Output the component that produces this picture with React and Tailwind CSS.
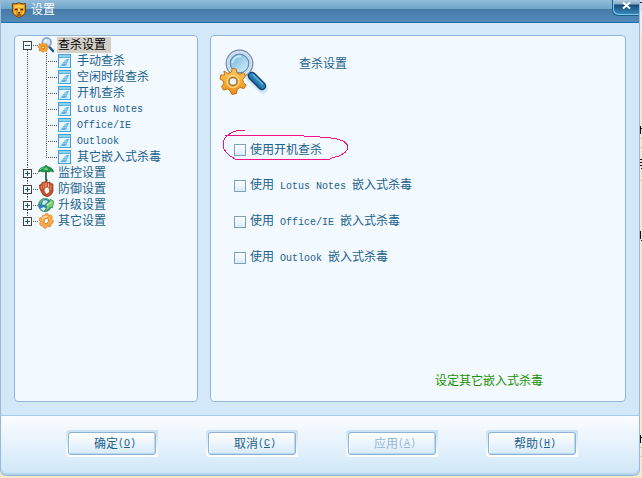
import { useState } from "react";

const CHILDREN = ["手动查杀", "空闲时段查杀", "开机查杀", "Lotus Notes", "Office/IE", "Outlook", "其它嵌入式杀毒"];

const OPTIONS = [
  { id: "boot", parts: ["使用开机查杀"] },
  { id: "lotus", parts: ["使用", " Lotus Notes ", "嵌入式杀毒"] },
  { id: "office", parts: ["使用", " Office/IE ", "嵌入式杀毒"] },
  { id: "outlook", parts: ["使用", " Outlook ", "嵌入式杀毒"] },
];

const BUTTONS = [
  { label: "确定", hotkey: "O" },
  { label: "取消", hotkey: "C" },
  { label: "应用", hotkey: "A", disabled: true },
  { label: "帮助", hotkey: "H" },
];

const DOTS_V = "w-px bg-[repeating-linear-gradient(to_bottom,#555_0px,#555_1px,transparent_1px,transparent_2px)]";
const DOTS_H = "h-px bg-[repeating-linear-gradient(to_right,transparent_0px,transparent_1px,#555_1px,#555_2px)]";

function Latin({ children }) {
  return <span className="font-['Liberation_Mono',monospace] text-[10px] whitespace-pre">{children}</span>;
}

function ShieldIcon() {
  return (
    <svg className="w-4 h-4 shrink-0" viewBox="0 0 16 16" aria-hidden="true">
      <path d="M1.5 1.5 L4 2 L8 0.8 L12 2 L14.5 1.5 V10 Q14 13.5 8 15.5 Q2 13.5 1.5 10 Z" fill="#e59a1c" stroke="#6b3f1c" />
      <path d="M3 3 L6 3.5 L8 2.5 L10 3.5 L13 3 L12.5 6.5 L8 5.5 L3.5 6.5 Z" fill="#ffcf45" />
      <path d="M4 7.5 H6.5 M12 7.5 H9.5" stroke="#4f2a0e" strokeWidth="1.4" />
      <path d="M7 10.5 H9 M8 10.5 V12 M6 13 H10" stroke="#5a2f10" fill="none" />
      <path d="M7.3 6.5 H8.7 V9.8 H7.3 Z" fill="#ffe98a" />
      <path d="M3.5 9 L4.5 12 M12.5 9 L11.5 12" stroke="#fbd04a" strokeWidth="1.3" />
    </svg>
  );
}

function ScanIcon({ className }) {
  return (
    <svg className={className} viewBox="0 0 50 50" aria-hidden="true">
      <defs>
        <linearGradient id="lens" x1="0" y1="0" x2="1" y2="1">
          <stop offset="0" stopColor="#6fb4da" />
          <stop offset="1" stopColor="#d8f0fb" />
        </linearGradient>
        <linearGradient id="handle" x1="0" y1="1" x2="1" y2="0">
          <stop offset="0" stopColor="#0d3f70" />
          <stop offset="0.55" stopColor="#2f8cc0" />
          <stop offset="1" stopColor="#0f4678" />
        </linearGradient>
        <linearGradient id="cog" x1="0" y1="0" x2="0" y2="1">
          <stop offset="0" stopColor="#ffc95c" />
          <stop offset="1" stopColor="#ee8f18" />
        </linearGradient>
      </defs>
      <path d="M27 24 L44 41" stroke="#b9dcf2" strokeWidth="10" strokeLinecap="round" opacity="0.6" />
      <path d="M29 25 L33 29" stroke="#6687a8" strokeWidth="4" />
      <path d="M33 28 L43 38" stroke="#123c69" strokeWidth="8.5" strokeLinecap="round" />
      <path d="M33 28 L43 38" stroke="url(#handle)" strokeWidth="6" strokeLinecap="round" />
      <path d="M34 26.5 L44 36.5" stroke="#68b9df" strokeWidth="1.4" />
      <circle cx="20.5" cy="15.5" r="13.3" fill="#f1f7fd" stroke="#6885ae" strokeWidth="1.2" />
      <circle cx="20.5" cy="15.5" r="11.3" fill="none" stroke="#c3d3ea" strokeWidth="1.6" />
      <circle cx="20.5" cy="15.5" r="9.3" fill="url(#lens)" stroke="#5787b5" strokeWidth="1.2" />
      <path d="M13 15 Q15 8 22 8" stroke="#c6e9f9" strokeWidth="2" fill="none" />
      <path
        d="M5 23 L9 25.5 L12 24.3 L13.5 20.5 L17 21 L18 24.8 L21 26.3 L24.5 24.5 L26.5 28 L23.8 31.5 L24.3 34.5 L27 37 L25 40.5 L21 39.5 L18 41.5 L17.5 45.5 L13 46.5 L11 42.5 L8.5 41 L4.5 42 L2.5 38.5 L4.8 35.5 L4.3 33 L1 31 L1.8 27 L5.5 27 Z"
        fill="url(#cog)" stroke="#bd6f19" strokeWidth="1" strokeLinejoin="round"
      />
      <circle cx="14" cy="33.5" r="6" fill="none" stroke="#ffd683" strokeWidth="1.3" />
      <circle cx="14" cy="33.5" r="4" fill="#e8f4fc" stroke="#a3712a" strokeWidth="1.4" />
    </svg>
  );
}

/* Same motif with heavier shapes, readable at 16px */
function ScanIconSmall() {
  return (
    <svg className="w-4 h-4 shrink-0" viewBox="0 0 16 16" aria-hidden="true">
      <path d="M11 9.5 L15 14" stroke="#1d5f93" strokeWidth="2.6" strokeLinecap="round" />
      <circle cx="8.7" cy="5.2" r="4.3" fill="#cfe9f8" stroke="#8ba4c9" strokeWidth="1.8" />
      <path d="M6.5 5 Q7 3 9 3" stroke="#fff" fill="none" />
      <path
        d="M1 6.5 L3.2 7.3 L4.8 5.8 L6.6 7.3 L9 6.8 L9 9 L10.5 10.8 L9 12.2 L8.8 14.3 L6.6 14 L4.8 15.5 L3.4 13.8 L1 13.8 L1.4 11.6 L0.2 9.8 L1.4 8.6 Z"
        fill="#f7a530" stroke="#d07c1c" strokeWidth="0.7"
      />
      <circle cx="5" cy="10.5" r="1.5" fill="#ffe2a6" stroke="#b8691a" strokeWidth="0.9" />
    </svg>
  );
}

function PageIcon() {
  return (
    <svg className="w-[13px] h-[14px] shrink-0" viewBox="0 0 13 14" aria-hidden="true">
      <rect x="0.5" y="0.5" width="12" height="13" fill="#d3edfb" stroke="#4a9fd8" />
      <path d="M1 1 H12 V3 H1 Z" fill="#8fd0f0" />
      <path d="M1 3.5 H12" stroke="#5fb2e2" />
      <path d="M1 4 H12 L1 12 Z" fill="#eef9ff" />
      <path d="M9 5 H11 L10 7 H6 Z M6 7.5 H10 L9 9.5 H4 Z M4 10 H9 L8 12 H2.5 Z" fill="#62b4e4" />
    </svg>
  );
}

function UmbrellaIcon() {
  return (
    <svg className="w-4 h-4 shrink-0" viewBox="0 0 16 16" aria-hidden="true">
      <path d="M8 6 V14.5 Q8 15.5 9.5 15" stroke="#14502d" strokeWidth="1.6" fill="none" />
      <path d="M0.5 7 Q1 2.5 7 1.5 L8 0 L9 1.5 Q15 2.5 15.5 7 L13 6 L11 7 L8 6 L5 7 L3 6 Z" fill="#22964a" stroke="#0e6b32" strokeWidth="0.7" />
      <path d="M5.5 5.5 Q6 3 8 2 Q10 3 10.5 5.5 L8 5 Z" fill="#64cf78" />
      <path d="M2 5 Q3 3 5.5 2.7" stroke="#7bd88a" fill="none" />
    </svg>
  );
}

function GloveIcon() {
  return (
    <svg className="w-4 h-4 shrink-0" viewBox="0 0 16 16" aria-hidden="true">
      <path d="M1.5 4 L3.5 3.5 L4 1.5 L6.5 1 L7 0.5 L9 0.5 L9.5 1.5 L12 1.2 L12.8 2.5 L14.8 3 L15 10 Q13.5 15 9 15.5 Q4.5 15 3.5 11 L1.8 7.5 Z" fill="#c7512b" stroke="#843018" strokeWidth="0.8" />
      <path d="M3.5 5 V8 M5.7 2 V7 M12.8 4 V9" stroke="#e88c62" />
      <path d="M8 2 V7 M10.5 2.5 V7" stroke="#f6bd9b" />
      <path d="M6 9 Q7 5.5 10 6 Q12.2 8 11.5 10.5 Q10.5 13.3 8.5 13 Q6.5 12 6 9 Z" fill="#fff6ee" stroke="#8f3920" strokeWidth="0.6" />
    </svg>
  );
}

function GlobeIcon() {
  return (
    <svg className="w-4 h-4 shrink-0" viewBox="0 0 16 16" aria-hidden="true">
      <circle cx="7" cy="8" r="6.6" fill="#2a7fc2" stroke="#5ba06a" strokeWidth="0.9" />
      <path d="M1 6.5 Q2.5 2 7.5 1.6 L5.5 4 L3.5 5 L3 8 Z" fill="#57b86a" />
      <path d="M5 4 Q8 2.5 10 4.5 L6.5 8 L4 7.5 Z" fill="#c9edfb" />
      <path d="M2.5 11.5 L5.5 10 L8 11.5 L6.5 14.3 Q4 13.8 2.5 11.5 Z" fill="#d6f0fb" />
      <path d="M7 7.5 L11.5 4.5 L12 2.2 L15.7 4 L14.5 11 L12.5 10 Q10 13.8 6 14.2 Q9 11.5 8.5 9.5 Z" fill="#7fcf72" stroke="#2d8544" strokeWidth="0.7" />
      <path d="M9 8.2 L13.8 5" stroke="#d2f5bf" />
    </svg>
  );
}

function GearIcon() {
  return (
    <svg className="w-4 h-4 shrink-0" viewBox="0 0 16 16" aria-hidden="true">
      <path d="M4.5 2.5 L6.5 2.5 L7.5 0.8 L10 0.8 L10.5 2.5 L12.8 2 L14.3 4 L13.5 6 L15.3 7.5 L14.8 10 L13 10.5 L13 13 L10.8 14 L9.5 13 L8 15.3 L5.5 14.8 L5 12.8 L2.8 12.8 L1.5 10.5 L2.8 8.8 L1 7 L1.8 4.8 L4 4.8 Z" fill="#f9ab48" stroke="#e0842a" strokeWidth="0.8" />
      <path d="M4 6.5 Q5.5 3 9.5 3.5" stroke="#ffdc9e" strokeWidth="1.4" fill="none" />
      <ellipse cx="8.3" cy="8" rx="2" ry="2.9" transform="rotate(25 8.3 8)" fill="#fff" stroke="#c8701f" strokeWidth="0.8" />
    </svg>
  );
}

const ROOTS = [
  { label: "监控设置", icon: UmbrellaIcon },
  { label: "防御设置", icon: GloveIcon },
  { label: "升级设置", icon: GlobeIcon },
  { label: "其它设置", icon: GearIcon },
];

/* Column with the +/- box and the dotted trunk running through it */
function Trunk({ open, onToggle, first, last, label }) {
  return (
    <div className="w-[9px] shrink-0 flex flex-col items-center">
      <div className={`h-1 ${first ? "" : DOTS_V}`} />
      <button type="button" aria-label={label} aria-expanded={open} onClick={onToggle} className="block">
        <svg className="block w-[9px] h-[9px]" viewBox="0 0 9 9" shapeRendering="crispEdges">
          <rect x="0.5" y="0.5" width="8" height="8" fill="#f4faff" stroke="#444" />
          <path d={open ? "M2 4.5 H7" : "M2 4.5 H7 M4.5 2 V7"} stroke="#1b5a82" />
        </svg>
      </button>
      {!last && <div className={`flex-1 ${DOTS_V}`} />}
    </div>
  );
}

function Tree() {
  const [open, setOpen] = useState(true);

  return (
    <ul className="leading-4">
      <li className="flex">
        <Trunk open={open} onToggle={() => setOpen(!open)} label="查杀设置" first />
        <div>
          <div className="h-4 flex items-center">
            <span className={`w-1.5 ${DOTS_H}`} />
            <ScanIconSmall />
            <span className="ml-[3px] pl-px pr-[5px] h-4 bg-[#d4d0c8] text-black">查杀设置</span>
          </div>
          {open && (
            <ul className="pl-[14px]">
              {CHILDREN.map((name, i) => (
                <li key={name} className="h-4 flex items-center">
                  <span className={`self-start ${DOTS_V} ${i === CHILDREN.length - 1 ? "h-[9px]" : "h-4"}`} />
                  <span className={`w-[11px] ${DOTS_H}`} />
                  <PageIcon />
                  <span className="ml-1.5 whitespace-nowrap">
                    {/^[A-Z]/.test(name) ? <Latin>{name}</Latin> : name}
                  </span>
                </li>
              ))}
            </ul>
          )}
        </div>
      </li>
      {ROOTS.map(({ label, icon: Icon }, i) => (
        <li key={label} className="flex h-4">
          <Trunk open={false} label={label} last={i === ROOTS.length - 1} />
          <div className="flex items-center">
            <span className={`w-1.5 ${DOTS_H}`} />
            <Icon />
            <span className="ml-1">{label}</span>
          </div>
        </li>
      ))}
    </ul>
  );
}

/* Hand-drawn ring around the first option */
function PenRing() {
  return (
    <svg className="absolute -left-3 -top-3 w-[128px] h-[32px] pointer-events-none" viewBox="0 0 128 32" fill="none" aria-hidden="true">
      <path
        d="M22.5 0.5 H15 L10 2.5 L6 5 L3 8 L1.5 11 V18 L4 22 L8 26 L14 29.5 H107 L111 27.5 L117 26 L123 22.5 L125.5 19 V15 L122 11.5 L115 9 L106 7.5 L90 6.5 L73 5.5 H2.5"
        stroke="#f4108a" shapeRendering="crispEdges"
      />
    </svg>
  );
}

/* Sliver of the document window that sits behind the dialog */
function BackgroundEdge() {
  return (
    <svg className="w-0.5 h-[478px] shrink-0" viewBox="0 0 2 478" shapeRendering="crispEdges" aria-hidden="true">
      <path d="M0 0 H2 V11 H0 Z" fill="#d8dde8" />
      <path d="M0 2 H2 V3 H0 Z" fill="#222" />
      <path d="M0 11 H2 V35 H0 Z" fill="#eeeeee" />
      <path d="M0 138 H2 V139 H0 Z M0 147 H2 V148 H0 Z M0 180 H2 V181 H0 Z M0 447 H2 V448 H0 Z M0 456 H2 V457 H0 Z" fill="#efc98b" />
      <path d="M0 126 H1 V134 H0 Z M1 128 H2 V129 H1 Z M0 159 H2 V160 H0 Z M0 162 H2 V163 H0 Z M0 165 H2 V166 H0 Z M1 168 H2 V169 H1 Z M0 231 H1 V239 H0 Z M1 240 H2 V241 H1 Z M0 435 H1 V443 H0 Z M1 437 H2 V438 H1 Z" fill="#111" />
    </svg>
  );
}

export default function App() {
  const [checked, setChecked] = useState({});

  return (
    <div className="min-h-screen flex bg-[#f7e8cc] font-['Liberation_Sans','Noto_Sans_CJK_SC',sans-serif] text-xs text-[#1d628b]">
      <div className="flex-1 flex flex-col mb-0.5 border-x border-[#9db9d4] rounded-b-md bg-[#d3e9f9] overflow-hidden">

        {/* Title bar */}
        <header className="h-[23px] flex items-start justify-between border-b border-[#1f6ca3] bg-[linear-gradient(to_bottom,#92bbd9_0px,#6fa5cb_9px,#4679a7_9px,#528ab9_22px)]">
          <div className="flex items-center gap-1 pl-2.5 pt-0.5">
            <ShieldIcon />
            <h1 className="text-white leading-4">设置</h1>
          </div>
          <button type="button" aria-label="关闭"
            className="w-[27px] h-4 flex justify-center border-l border-b border-[#1c5f8c] rounded-bl-md shadow-[inset_1px_-1px_0_#7fc8ec] bg-[linear-gradient(to_bottom,#b4cbdc_0px,#86abc7_4px,#174d7c_5px,#3987b8_14px)]">
            <svg className="w-[9px] h-[9px] mt-px" viewBox="0 0 9 9" aria-hidden="true">
              <path d="M1 1.5 L8 7.5 M8 1.5 L1 7.5" stroke="#fff" strokeWidth="2" />
            </svg>
          </button>
        </header>

        {/* Panels */}
        <main className="flex-1 flex gap-3 px-[13px] pt-3 pb-[13px]">
          <nav className="w-[184px] shrink-0 border border-[#92b6d9] rounded-[4px] bg-[#f2f9ff] pl-2 pt-px">
            <Tree />
          </nav>

          <section className="flex-1 flex flex-col border border-[#92b6d9] rounded-[4px] bg-[#f2f9ff]">
            <div className="flex pl-2 pt-3 gap-[30px]">
              <ScanIcon className="w-[50px] h-[50px] shrink-0" />
              <h2 className="pt-2 leading-4">查杀设置</h2>
            </div>

            <div className="flex flex-col gap-5 pl-[23px] pt-11">
              {OPTIONS.map((option, i) => (
                <div key={option.id} className="relative h-4 flex items-center gap-1">
                  <input id={option.id} type="checkbox" checked={!!checked[option.id]}
                    onChange={(e) => setChecked({ ...checked, [option.id]: e.target.checked })}
                    className="appearance-none w-3 h-3 border border-[#7f9fc0] bg-linear-to-b from-white to-[#d9ebf8] checked:bg-[#4679a7]" />
                  <label htmlFor={option.id} className="leading-4 whitespace-nowrap">
                    {option.parts.map((part) => (part.startsWith(" ") ? <Latin key={part}>{part}</Latin> : part))}
                  </label>
                  {i === 0 && <PenRing />}
                </div>
              ))}
            </div>

            <p className="mt-auto self-end pr-[82px] pb-3 leading-4 text-[#1c9200]">设定其它嵌入式杀毒</p>
          </section>
        </main>

        {/* Buttons */}
        <footer className="flex justify-center gap-12 pl-1 pt-3.5 pb-[18px] border-y border-t-[#a9cbe7] border-b-[#8fb4d3] rounded-b-md bg-linear-to-b from-[#fbfdff] to-[#cfe7f9] shadow-[inset_0_-2px_1px_#b4d5ee]">
          {BUTTONS.map(({ label, hotkey, disabled }) => (
            <button key={label} type="button" disabled={disabled}
              className="w-[92px] h-[27px] p-0.5 rounded-l-[4px] bg-linear-to-b from-[#c9e2f4] to-white">
              <span className={`h-full pl-1.5 flex items-center justify-center border border-[#8eb2d5] rounded-[3px] bg-linear-to-b from-white to-[#d7ebfa] shadow-[inset_1px_1px_0_#fff,inset_-1px_-1px_0_#bdd8ee] leading-4 ${disabled ? "text-[#95b7d6]" : ""}`}>
                {label}<Latin>(<u>{hotkey}</u>)</Latin>
              </span>
            </button>
          ))}
        </footer>
      </div>
      <BackgroundEdge />
    </div>
  );
}
